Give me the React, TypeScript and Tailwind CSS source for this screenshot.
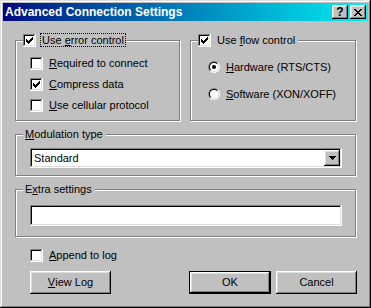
import React from "react";

// Win98 bevels
const raised =
  "shadow-[inset_-1px_-1px_#000,inset_1px_1px_#fff,inset_-2px_-2px_#808080,inset_2px_2px_#dfdfdf]";
const sunken =
  "shadow-[inset_-1px_-1px_#fff,inset_1px_1px_#808080,inset_-2px_-2px_#dfdfdf,inset_2px_2px_#000]";

function Check({ checked }: { checked?: boolean }) {
  return (
    <span className={`w-[13px] h-[13px] shrink-0 bg-white flex items-center justify-center ${sunken}`}>
      {checked && (
        <svg width="7" height="7" viewBox="0 0 7 7" shapeRendering="crispEdges">
          <path
            fill="#000"
            d="M6 0h1v1h-1z M5 1h2v1h-2z M0 2h1v1h-1z M4 2h3v1h-3z M0 3h2v1h-2z M3 3h3v1h-3z M0 4h5v1h-5z M1 5h3v1h-3z M2 6h1v1h-1z"
          />
        </svg>
      )}
    </span>
  );
}

function Radio({ checked }: { checked?: boolean }) {
  return (
    <span className="w-[12px] h-[12px] shrink-0 rounded-full flex border border-t-[#808080] border-l-[#808080] border-r-white border-b-white">
      <span className="flex-1 rounded-full flex items-center justify-center bg-white border border-t-black border-l-black border-r-[#dfdfdf] border-b-[#dfdfdf]">
        {checked && <span className="w-[4px] h-[4px] rounded-full bg-black" />}
      </span>
    </span>
  );
}

function Text({ children, focus }: { children: React.ReactNode; focus?: boolean }) {
  return (
    <span
      className={`px-[1px] h-[14px] flex items-center border ${
        focus ? "border-dotted border-black" : "border-transparent"
      }`}
    >
      {children}
    </span>
  );
}

function Group({
  legend,
  className = "",
  children,
}: {
  legend: React.ReactNode;
  className?: string;
  children?: React.ReactNode;
}) {
  return (
    <div
      className={`flex flex-col border border-[#808080] shadow-[inset_1px_1px_0_#fff,1px_1px_0_#fff] ${className}`}
    >
      <div className="-mt-[8px] ml-[7px] self-start h-[14px] flex items-center gap-[4px] bg-[#c0c0c0] pr-[1px]">
        {legend}
      </div>
      {children}
    </div>
  );
}

function Button({ children, isDefault, className = "" }: { children: React.ReactNode; isDefault?: boolean; className?: string }) {
  if (isDefault) {
    return (
      <div className={`h-[23px] border border-black flex ${className}`}>
        <button className={`flex-1 flex items-center justify-center ${raised}`}>{children}</button>
      </div>
    );
  }
  return (
    <button className={`h-[23px] flex items-center justify-center ${raised} ${className}`}>{children}</button>
  );
}

export default function App() {
  return (
    <div
      className={`w-[371px] h-[308px] p-[3px] flex flex-col bg-[#c0c0c0] text-black text-[11px] leading-none font-['Liberation_Sans',Arial,sans-serif] shadow-[inset_-1px_-1px_#000,inset_1px_1px_#dfdfdf,inset_-2px_-2px_#808080,inset_2px_2px_#fff]`}
    >
      {/* title bar */}
      <div className="h-[18px] shrink-0 flex items-center px-[2px] bg-linear-to-r from-[#000080] to-[#10f0f0]">
        <span className="text-white font-bold text-[12px]">Advanced Connection Settings</span>
        <div className="ml-auto flex gap-[2px]">
          <button className={`w-[16px] h-[14px] bg-[#c0c0c0] flex items-center justify-center font-bold text-[12px] ${raised}`}>
            ?
          </button>
          <button className={`w-[16px] h-[14px] bg-[#c0c0c0] flex items-center justify-center ${raised}`}>
            <svg width="8" height="7" viewBox="0 0 8 7" shapeRendering="crispEdges">
              <path
                fill="#000"
                d="M0 0h2v1h-2z M6 0h2v1h-2z M1 1h2v1h-2z M5 1h2v1h-2z M2 2h4v1h-4z M3 3h2v1h-2z M2 4h4v1h-4z M1 5h2v1h-2z M5 5h2v1h-2z M0 6h2v1h-2z M6 6h2v1h-2z"
              />
            </svg>
          </button>
        </div>
      </div>

      <div className="flex-1 flex flex-col px-[12px]">
        {/* top groups */}
        <div className="mt-[19px] flex gap-[10px]">
          <Group
            className="w-[165px] h-[81px]"
            legend={
              <>
                <Check checked />
                <Text focus>
                  Use&nbsp;<u>e</u>rror control
                </Text>
              </>
            }
          >
            <div className="mt-[10px] pl-[14px] flex flex-col gap-[8px]">
              <div className="h-[13px] flex items-center gap-[4px]">
                <Check />
                <Text>
                  <u>R</u>equired to connect
                </Text>
              </div>
              <div className="h-[13px] flex items-center gap-[4px]">
                <Check checked />
                <Text>
                  <u>C</u>ompress data
                </Text>
              </div>
              <div className="h-[13px] flex items-center gap-[4px]">
                <Check />
                <Text>
                  <u>U</u>se cellular protocol
                </Text>
              </div>
            </div>
          </Group>
          <Group
            className="w-[166px] h-[81px]"
            legend={
              <>
                <Check checked />
                <Text>
                  Use&nbsp;<u>f</u>low control
                </Text>
              </>
            }
          >
            <div className="mt-[14px] pl-[17px] flex flex-col gap-[15px]">
              <div className="h-[12px] flex items-center gap-[4px]">
                <Radio checked />
                <Text>
                  <u>H</u>ardware (RTS/CTS)
                </Text>
              </div>
              <div className="h-[12px] flex items-center gap-[4px]">
                <Radio />
                <Text>
                  <u>S</u>oftware (XON/XOFF)
                </Text>
              </div>
            </div>
          </Group>
        </div>

        {/* modulation */}
        <Group
          className="mt-[13px] h-[42px]"
          legend={
            <Text>
              <u>M</u>odulation type
            </Text>
          }
        >
          <div className="mt-[7px] pl-[14px] pr-[13px]">
            <div className={`h-[20px] bg-white flex items-center p-[2px] ${sunken}`}>
              <span className="flex-1 pl-[2px]">Standard</span>
              <span className={`w-[16px] h-[16px] bg-[#c0c0c0] flex items-center justify-center ${raised}`}>
                <svg width="7" height="4" viewBox="0 0 7 4" shapeRendering="crispEdges">
                  <path fill="#000" d="M0 0h7v1h-7z M1 1h5v1h-5z M2 2h3v1h-3z M3 3h1v1h-1z" />
                </svg>
              </span>
            </div>
          </div>
        </Group>

        {/* extra settings */}
        <Group
          className="mt-[13px] h-[48px]"
          legend={
            <Text>
              E<u>x</u>tra settings
            </Text>
          }
        >
          <div className="mt-[9px] pl-[14px] pr-[13px]">
            <div className={`h-[21px] bg-white ${sunken}`} />
          </div>
        </Group>

        {/* append */}
        <div className="mt-[12px] pl-[15px] h-[13px] flex items-center gap-[4px]">
          <Check />
          <Text>
            <u>A</u>ppend to log
          </Text>
        </div>

        {/* buttons */}
        <div className="mt-[9px] pl-[15px] -mr-[1px] flex">
          <Button className="w-[81px]">
            <u>V</u>iew&nbsp;Log
          </Button>
          <div className="flex-1" />
          <Button isDefault className="w-[82px]">
            OK
          </Button>
          <Button className="w-[81px] ml-[5px]">Cancel</Button>
        </div>
      </div>
    </div>
  );
}
